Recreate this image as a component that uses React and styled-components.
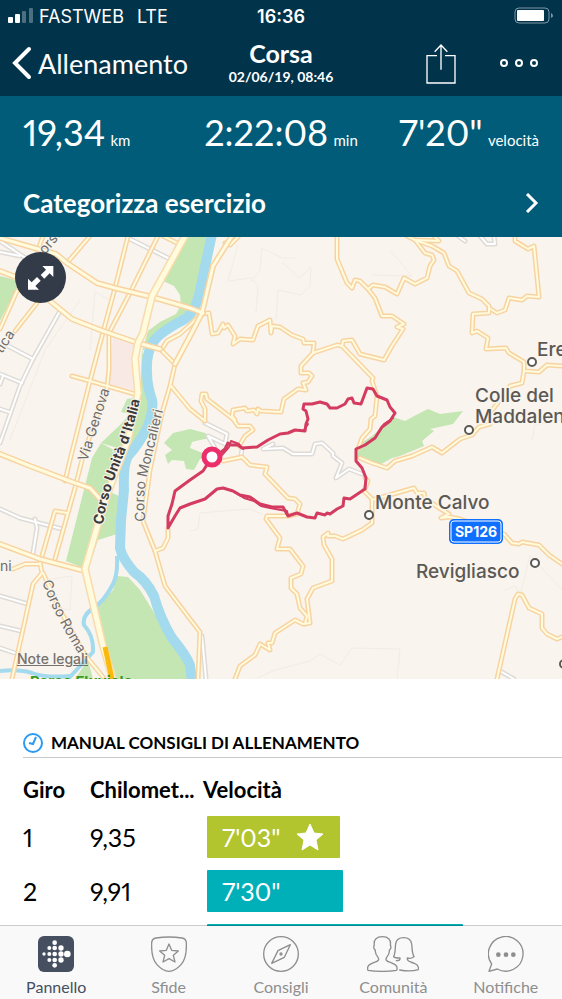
import React from 'react';
import styled, { createGlobalStyle } from 'styled-components';

const laps = [
  { lap: 1, km: '9,35', pace: `7'03"`, width: 40, color: '#b2c42e', best: true },
  { lap: 2, km: '9,91', pace: `7'30"`, width: 41, color: '#00b0b9' },
  { lap: 3, km: '0,08', pace: `13'59"`, width: 77, color: '#00b0b9' },
];

const stats = [
  { value: '19,34', unit: 'km' },
  { value: '2:22:08', unit: 'min' },
  { value: `7'20"`, unit: 'velocità' },
];

// map geometry
const parks = [
  '187,236 208,236 192,308 185,318 155,335 145,348 142,352 148,331 160,322 176,314 181,305 180,295 174,286 163,281',
  '0,276 16,280 17,288 0,321',
  '121,412 127,399 140,397 142,350 147,372 151,395 154,410 146,430 131,452 101,443 120,425 130,414 121,412',
  '101,443 112,449 119,452 112,493 119,496 117,534 98,540 88,570 66,561 92,458',
  '117,576 128,577 140,590 160,622 173,646 187,662 190,679 113,679 97,607 113,590',
  '164,443 173,433 190,429 205,433 211,438 200,440 192,442 190,448 200,452 210,456 200,459 194,470 186,469 184,461 172,460 168,464 165,455 172,450',
  '356,458 360,444 372,436 393,417 405,421 416,415 428,409 440,414 463,411 453,424 430,429 434,431 422,441 424,446 400,456 392,458 378,466 366,460',
  '75,679 88,660 93,679',
];

const alleys = [
  '60,311 33,359 20,386 0,443',
  '8,346 33,359',
  '0,374 22,383',
  '3,376 0,384',
  '0,409 9,412',
  '128,238 168,258',
  '0,241 24,257 40,264',
  '0,252 20,256',
  '0,509 20,518 62,529',
  '35,519 37,528 33,553',
  '0,596 28,604',
  '0,626 21,631',
  '0,648 15,653',
  '205,423 227,434 225,444 208,436 215,448',
  '242,449 241,456',
  '273,444 263,449 283,448 293,454 312,454 315,444 322,443 333,453 333,456 342,463 336,478 349,469 362,474',
  '480,236 487,244 495,244 494,236',
  '458,236 465,241',
  '202,636 206,679',
  '500,671 514,679',
];

const footpaths = [
  '238,245 228,281 251,278 258,286 256,312',
  '251,282 260,270 262,248 282,258 296,258',
  '282,262 299,278 311,267 310,286 301,295 278,290 276,320',
  '190,531 198,529 200,513 235,510 250,509 262,514',
  '257,678 275,670 310,661 320,654 340,665 352,648 400,649 397,679',
  '372,275 412,276 390,250',
  '80,300 45,350 10,440',
  '90,350 95,292 110,300',
  '45,580 72,576 70,610 48,606',
  '505,590 515,586 520,595 530,555 562,590',
  '532,440 535,425 562,420',
];

const streets = [
  '128,236 115,288 102,336 90,381 71,456 65,481',
  '158,236 132,289 109,333 109,369 107,389 92,430 83,456 75,488 55,559',
  '72,376 90,381 138,395',
  '90,236 67,263',
  '43,236 38,250',
  '37,303 15,331',
  '17,291 0,329',
  '163,236 177,243',
  '160,349 175,364',
  '162,349 167,341 180,334 190,325 203,312',
  '175,364 170,386 162,413 150,470 143,521 155,551 165,586 190,619 200,632 198,679',
  '171,386 190,409 205,421 205,409 201,401 202,394 206,394 207,399 233,419 238,426 250,426 253,430 245,436 239,446',
  '67,513 55,511 40,563 42,573 33,584 12,679',
  '13,569 25,564 40,564',
  '43,573 60,610 85,655 103,677',
  '168,529 168,538 163,548 155,551',
  '238,237 230,245 225,243',
  '202,314 209,313 212,334 218,333 223,324 224,328 228,325 235,336 233,344 240,339 253,340 258,326 270,320 271,333 272,326 280,327 292,335 303,339 304,343 314,343 313,353 337,345 342,346 373,378 372,381 377,396 375,416 371,419 370,429 362,438 358,449',
  '313,353 301,366 301,373 309,373 312,376 308,382 303,383 306,390 298,389 284,399 281,412 261,411 258,409 257,414 254,410 247,411 245,408 233,410 232,416 235,420',
  '337,236 337,259 347,283 352,288 355,280 360,281 368,289 375,298 382,316 392,316 404,324 397,327 403,329 392,346 384,360 360,354 352,340 343,341 342,346',
  '368,289 373,285 385,287 397,294 404,278 415,284 427,278 430,266 434,260 432,255 425,253 415,240 439,241 434,236',
  '407,236 415,240 432,246 444,253 449,266 457,271 469,293 482,299 489,306 489,313 473,314 472,333 477,331 488,338 486,349 506,348 509,353 524,362 524,371 522,383 510,386 505,394 489,414 490,424 479,427 472,435 460,439 442,453 432,447 412,456 395,461 387,468 372,463 360,458',
  '489,308 497,313 505,310 509,298 522,300 527,296 539,297 534,246 528,249 515,241 515,236',
  '524,371 539,372 547,365 562,366',
  '223,461 242,457 250,465 267,467 265,474 288,498 295,499 300,504 297,514 288,516 267,516 266,519 280,538 277,549 290,549 303,566 301,574 291,578 291,588 297,594 300,608 307,616 305,624',
  '365,478 368,481 364,491 372,499 372,523 362,530 343,539 335,536 328,536 328,533 323,537 324,545 332,559 332,581 313,588 307,599 310,623 303,624 295,620 275,633 272,643 268,643 270,650 260,644 255,655 240,666 235,679',
  '372,500 414,488 417,493 424,493 425,498 439,508 449,514 441,518 450,517 460,519 504,534 512,543 519,544 522,542 539,545 549,555 562,564',
  '497,679 515,599 518,594 522,595 529,608 542,614 542,628 547,634 557,639 562,637',
];

const avenues = [
  '0,238 38,249 56,254 67,263 97,283 115,288 152,297 190,308 203,313',
  '0,271 18,278 50,301 72,319 103,331 138,343 160,349',
  '0,454 30,466 75,483 90,488 99,498',
  '0,544 40,559 85,571',
  '232,236 213,266 202,313 190,336 175,364',
];

const boulevards = [
  '185,236 152,296 143,333 138,343 135,359 138,393',
  '138,393 128,440 108,492 98,524 85,569 103,646 113,679',
];

const river =
  'M212 234 Q206 262 199 295 Q195 312 185 319 Q160 332 154 341 Q146 352 147 372 Q147 386 152 400 Q154 410 147 428 Q139 444 128 456 Q123 464 124 490 L121 520 L120 548 Q122 558 134 572 Q146 580 154 596 Q160 618 172 638 Q186 655 190 665 L192 682';
const stream =
  'M117 556 Q118 574 113 584 Q104 602 92 609 Q82 616 84 625 Q94 636 93 652 Q84 662 68 679';

const route =
  'M212 457 L220 453 L225 449 L228 443 L231 445 L238 445 L242 448 L257 447 L268 440 L280 434 L288 433 L295 430 L305 431 L306 424 L308 419 L306 411 L303 409 L304 404 L312 404 L320 402 L327 404 L330 408 L337 408 L345 404 L348 399 L352 398 L354 403 L361 404 L364 396 L367 388 L373 389 L377 396 L387 400 L390 407 L395 413 L390 421 L382 427 L375 438 L365 445 L356 449 L356 461 L362 468 L366 478 L365 489 L350 499 L344 498 L343 506 L337 509 L330 514 L327 513 L325 515 L317 513 L315 518 L307 517 L297 513 L288 516 L283 507 L272 507 L260 504 L250 497 L240 495 L233 491 L223 488 L217 489 L205 499 L190 504 L180 508 L175 516 L168 528 L168 516 L172 504 L175 491 L190 480 L203 471 Z';
const routeBack =
  'M222 455 L229 447 L231 441 L239 444 L243 449 M288 516 L287 511 L281 510 L270 508 L261 506 L254 501 L244 498 L234 492 M304 430 L308 424 M393 418 L384 424 L380 430';

const towns = [
  { x: 537, y: 356, text: 'Ere' },
  { x: 475, y: 402, text: 'Colle del' },
  { x: 475, y: 423, text: 'Maddalen' },
  { x: 375, y: 509, text: 'Monte Calvo' },
  { x: 416, y: 578, text: 'Revigliasco' },
];

const markers = [
  [532, 362],
  [469, 430],
  [369, 515],
  [535, 563],
  [564, 664],
];

const RoadLines = ({ lines, casing, fill, width }) => (
  <g fill="none" strokeLinejoin="round" strokeLinecap="round">
    {lines.map(points => (
      <polyline key={points} points={points} stroke={casing} strokeWidth={width + 3} />
    ))}
    {lines.map(points => (
      <polyline key={points} points={points} stroke={fill} strokeWidth={width} />
    ))}
  </g>
);

const RouteMap = () => (
  <MapDrawing viewBox="0 237 562 442" role="img" aria-label="Mappa del percorso">
    <rect x="0" y="230" width="562" height="460" fill="#f9f4ed" />
    <polygon points="113,337 136,343 134,390 108,384" fill="#f9e9e5" />
    {parks.map(points => (
      <polygon key={points} points={points} fill="#c4e6b2" />
    ))}
    <g fill="none" stroke="#f1ece4">
      {footpaths.map(points => (
        <polyline key={points} points={points} />
      ))}
    </g>
    <g fill="none" stroke="#a3daee" strokeLinejoin="round">
      <path d={river} strokeWidth="10" />
      <path d={stream} strokeWidth="4" />
      <path d="M0 671 Q20 669 32 673 Q45 678 70 676" strokeWidth="4" />
    </g>
    <RoadLines lines={alleys} casing="#dedbd7" fill="#ffffff" width={2} />
    <RoadLines lines={streets} casing="#f8d3a2" fill="#fffbdc" width={2} />
    <RoadLines lines={avenues} casing="#f8d3a2" fill="#fffbdc" width={3} />
    <RoadLines lines={boulevards} casing="#f8dcae" fill="#fffbdc" width={5} />
    <path d="M105 647 L112 679" stroke="#fbb90c" strokeWidth="5" />
    <g fill="none" stroke="#d43b60" strokeLinejoin="round" strokeLinecap="round">
      <path d={route} strokeWidth="3" />
      <path d={routeBack} strokeWidth="2" />
    </g>
    <circle cx="212" cy="457" r="8" fill="#fff" stroke="#ec2f6b" strokeWidth="5" />

    <path id="genova" d="M87 462 L110 389" fill="none" />
    <path id="unita" d="M103 525 Q107 495 122 459 Q132 435 141 396" fill="none" />
    <path id="moncalieri" d="M146 521 Q141 495 150 464 L164 407" fill="none" />
    <path id="roma" d="M42 582 Q56 620 84 662" fill="none" />
    <path id="corso" d="M45 255 L68 228" fill="none" />
    <path id="tica" d="M2 354 L21 325" fill="none" />
    <StreetName>
      <textPath href="#genova">Via Genova</textPath>
    </StreetName>
    <StreetName $main>
      <textPath href="#unita">Corso Unità d'Italia</textPath>
    </StreetName>
    <StreetName>
      <textPath href="#moncalieri">Corso Moncalieri</textPath>
    </StreetName>
    <StreetName>
      <textPath href="#roma">Corso Roma</textPath>
    </StreetName>
    <StreetName>
      <textPath href="#corso">orso</textPath>
    </StreetName>
    <StreetName>
      <textPath href="#tica">tica</textPath>
    </StreetName>
    <StreetName x="0" y="571">
      ni
    </StreetName>
    <ParkName x="30" y="687">
      Parco Fluviale
    </ParkName>

    {towns.map(({ x, y, text }) => (
      <TownName key={text} x={x} y={y}>
        {text}
      </TownName>
    ))}
    {markers.map(([cx, cy]) => (
      <circle key={cx} cx={cx} cy={cy} r="4" fill="#fff" stroke="#5b5955" strokeWidth="2" />
    ))}
    <rect x="449" y="519" width="54" height="25" rx="5" fill="#0f6fff" />
    <rect x="451" y="521" width="50" height="21" rx="3" fill="none" stroke="#fff" />
    <RoadNumber x="476" y="537">
      SP126
    </RoadNumber>
  </MapDrawing>
);

const FitbitIcon = () => (
  <svg width="36" height="36" viewBox="0 0 108 108">
    <rect width="108" height="108" rx="18" fill="#454f60" />
    <g fill="#fff">
      <circle cx="18" cy="54" r="5" />
      {[36, 54, 72].map(y => (
        <circle key={y} cx="34" cy={y} r="6" />
      ))}
      {[20, 36, 54, 72, 88].map(y => (
        <circle key={y} cx="50" cy={y} r="7" />
      ))}
      {[36, 54, 72].map(y => (
        <circle key={y} cx="69" cy={y} r="8" />
      ))}
      <circle cx="88" cy="54" r="10" />
    </g>
  </svg>
);

const ShieldIcon = () => (
  <LineIcon width="36" height="36" viewBox="0 0 108 108">
    <path d="M15 6 Q54 0 93 6 Q105 8 106 20 Q108 66 90 86 Q72 106 54 106 Q36 106 18 86 Q0 66 2 20 Q3 8 15 6Z" />
    <path d="M54 24 L62 43 L82 45 L67 58 L72 78 L54 68 L36 78 L41 58 L26 45 L46 43Z" />
  </LineIcon>
);

const CompassIcon = () => (
  <LineIcon width="36" height="36" viewBox="0 0 108 108">
    <circle cx="54" cy="54" r="52" />
    <path d="M26 82 L45 44 L82 26 L64 64Z" />
    <circle cx="54" cy="54" r="3" />
  </LineIcon>
);

const PeopleIcon = () => (
  <LineIcon width="52" height="36" viewBox="0 0 156 108">
    <path d="M3 103 C-2 90 8 84 22 79 C36 75 37 70 33 64 C27 57 24 48 25 42 C20 40 19 31 22 28 C19 10 30 2 46 2 C62 2 73 10 70 28 C73 31 72 40 67 42 C68 48 65 57 59 64 C55 70 56 75 70 79 C84 84 94 90 89 103 C60 107 30 107 3 103Z" />
    <path d="M88 74 C96 74 100 72 99 66 C92 66 84 66 80 62 C86 50 84 34 86 24 C88 9 98 5 110 5 C122 5 132 10 134 24 C136 36 134 50 141 62 C136 66 128 68 121 66 V70 C123 77 132 78 142 82 C152 86 156 92 154 101 C140 105 115 105 98 102" />
  </LineIcon>
);

const ChatIcon = () => (
  <LineIcon width="36" height="36" viewBox="0 0 108 108">
    <path d="M11 84 A52 52 0 1 1 28 99 L3 106Z" />
    <g fill="#8e8e8e" stroke="none">
      <circle cx="31" cy="56" r="7" />
      <circle cx="54" cy="56" r="7" />
      <circle cx="76" cy="56" r="7" />
    </g>
  </LineIcon>
);

const tabs = [
  { label: 'Pannello', icon: <FitbitIcon />, active: true },
  { label: 'Sfide', icon: <ShieldIcon /> },
  { label: 'Consigli', icon: <CompassIcon /> },
  { label: 'Comunità', icon: <PeopleIcon /> },
  { label: 'Notifiche', icon: <ChatIcon /> },
];

const App = () => {
  return (
    <Screen>
      <GlobalStyle />
      <Header>
        <StatusBar>
          <Carrier>
            <svg width="26" height="16" viewBox="0 0 26 16" fill="#fff">
              <rect x="0" y="9" width="5" height="6" rx="1" />
              <rect x="7" y="6" width="5" height="9" rx="1" />
              <rect x="14" y="3" width="4" height="12" rx="1" opacity=".3" />
              <rect x="21" y="0" width="4" height="15" rx="1" opacity=".3" />
            </svg>
            <span>FASTWEB</span>
            <Network>LTE</Network>
          </Carrier>
          <Clock>16:36</Clock>
          <Battery width="40" height="18" viewBox="0 0 40 18">
            <rect x="1" y="1" width="34" height="15" rx="4" fill="none" stroke="#7e97a6" />
            <rect x="3" y="3" width="27" height="11" rx="1" fill="#fff" />
            <path d="M37 6 Q39 7 39 9 Q39 10 37 11Z" fill="#7e97a6" />
          </Battery>
        </StatusBar>
        <NavBar>
          <BackButton>
            <svg width="20" height="34" viewBox="0 0 20 34">
              <path d="M17 3 L3 17 L17 31" fill="none" stroke="#fff" strokeWidth="4" strokeLinecap="round" />
            </svg>
            Allenamento
          </BackButton>
          <Heading>
            <Title>Corsa</Title>
            <Subtitle>02/06/19, 08:46</Subtitle>
          </Heading>
          <Actions>
            <IconButton aria-label="Condividi">
              <svg width="30" height="41" viewBox="0 0 90 123" fill="none" stroke="#fff" strokeWidth="4">
                <path d="M33 38 H3 V120 H87 V38 H57 M45 80 V6 M26 26 L45 6 L64 26" />
              </svg>
            </IconButton>
            <IconButton aria-label="Altro">
              <svg width="40" height="10" viewBox="0 0 40 10" fill="none" stroke="#fff" strokeWidth="2">
                <circle cx="5" cy="5" r="3" />
                <circle cx="20" cy="5" r="3" />
                <circle cx="35" cy="5" r="3" />
              </svg>
            </IconButton>
          </Actions>
        </NavBar>
      </Header>

      <Content>
        <Summary>
          <Stats>
            {stats.map(({ value, unit }) => (
              <Stat key={unit}>
                {value} <Unit>{unit}</Unit>
              </Stat>
            ))}
          </Stats>
          <CategoryButton>
            Categorizza esercizio
            <svg width="14" height="20" viewBox="0 0 14 20">
              <path d="M2 1 L11 10 L2 19" fill="none" stroke="#fff" strokeWidth="3" />
            </svg>
          </CategoryButton>
        </Summary>

        <MapSection>
          <RouteMap />
          <ExpandButton aria-label="Espandi mappa">
            <svg width="51" height="51" viewBox="45 46 153 153" fill="#fff">
              <path d="M127 88 H160 V121 L149 110 L133 126 L122 115 L138 99Z" />
              <path d="M117 159 H84 V126 L95 137 L111 121 L122 132 L106 148Z" />
            </svg>
          </ExpandButton>
          <LegalLink href="#note">Note legali</LegalLink>
        </MapSection>

        <Laps>
          <SectionTitle>
            <svg width="20" height="20" viewBox="0 0 20 20" fill="none" stroke="#2b9af3" strokeWidth="2">
              <circle cx="10" cy="10" r="9" />
              <path d="M13 4 L10 11 L6 10" />
            </svg>
            MANUAL CONSIGLI DI ALLENAMENTO
          </SectionTitle>
          <Table>
            <thead>
              <tr>
                <HeadCell $width={67}>Giro</HeadCell>
                <HeadCell $width={113}>Chilomet...</HeadCell>
                <HeadCell>Velocità</HeadCell>
              </tr>
            </thead>
            <tbody>
              {laps.map(({ lap, km, pace, width, color, best }) => (
                <tr key={lap}>
                  <Cell>{lap}</Cell>
                  <Cell>{km}</Cell>
                  <BarCell>
                    <Bar $color={color} style={{ width: `${width}%` }}>
                      {pace}
                      {best && (
                        <svg width="30" height="28" viewBox="0 0 30 28" fill="#fff">
                          <path
                            d="M15 1 L19 10 L28 11 L21 17 L23 27 L15 22 L7 27 L9 17 L2 11 L11 10Z"
                            stroke="#fff"
                            strokeLinejoin="round"
                          />
                        </svg>
                      )}
                    </Bar>
                  </BarCell>
                </tr>
              ))}
            </tbody>
          </Table>
        </Laps>
      </Content>

      <TabBar>
        {tabs.map(({ label, icon, active }) => (
          <Tab key={label} $active={active}>
            {icon}
            {label}
          </Tab>
        ))}
      </TabBar>
    </Screen>
  );
};

export default App;

const GlobalStyle = createGlobalStyle`
  * {
    box-sizing: border-box;
  }

  body {
    margin: 0;
    font-family: Lato, 'Open Sans', sans-serif;
    font-variant-numeric: proportional-nums;
    background-color: white;
  }

  button {
    padding: 0;
    border: none;
    background: none;
    color: inherit;
    font: inherit;
    cursor: pointer;
  }

  svg {
    display: block;
    flex-shrink: 0;
  }
`;

const Screen = styled.div`
  display: flex;
  flex-direction: column;
  height: 100vh;
`;

const Header = styled.header`
  flex-shrink: 0;
  background-color: #01334b;
  color: white;
`;

const StatusBar = styled.div`
  display: grid;
  grid-template-columns: 1fr auto 1fr;
  align-items: center;
  height: 30px;
  padding: 2px 8px 0;
  font-family: Inter, sans-serif;
  font-size: 18px;
`;

const Carrier = styled.div`
  display: flex;
  align-items: center;
  gap: 5px;
`;

const Network = styled.span`
  margin-left: 8px;
`;

const Clock = styled.time`
  font-weight: 600;
`;

const Battery = styled.svg`
  justify-self: end;
`;

const NavBar = styled.div`
  display: grid;
  grid-template-columns: 1fr auto 1fr;
  align-items: center;
  height: 66px;
  padding: 0 12px;
`;

const BackButton = styled.button`
  display: flex;
  align-items: center;
  gap: 6px;
  justify-self: start;

  &&& {
    font-size: 27px;
  }
`;

const Heading = styled.div`
  text-align: center;
`;

const Title = styled.h1`
  margin: 0;
  font-size: 25px;
  line-height: 28px;
  font-weight: 700;
`;

const Subtitle = styled.div`
  font-size: 14px;
  line-height: 20px;
  font-weight: 700;
  font-variant-numeric: tabular-nums;
`;

const Actions = styled.div`
  display: flex;
  justify-content: flex-end;
  align-items: center;
  gap: 43px;
  padding-right: 11px;
`;

const IconButton = styled.button``;

const Content = styled.main`
  flex: 1;
  min-height: 0;
  overflow-y: auto;
  scrollbar-width: none;
`;

const Summary = styled.section`
  background-color: #005c79;
  color: white;
  padding: 14px 23px 0;
`;

const Stats = styled.div`
  display: grid;
  grid-template-columns: 1fr auto 1fr;
`;

const Stat = styled.div`
  height: 44px;
  font-size: 36px;
  line-height: 44px;
  white-space: nowrap;

  &:last-child {
    text-align: right;
  }
`;

const Unit = styled.span`
  margin-left: -4px;
  font-size: 15px;
  line-height: 20px;
`;

const CategoryButton = styled.button`
  display: flex;
  justify-content: space-between;
  align-items: center;
  width: 100%;
  height: 83px;
  padding-top: 14px;

  &&& {
    padding-top: 14px;
    font-size: 26px;
    font-weight: 700;
    line-height: 30px;
  }
`;

const MapSection = styled.section`
  position: relative;
`;

const MapDrawing = styled.svg`
  width: 100%;
  height: auto;
  aspect-ratio: 562 / 442;
  font-family: Inter, sans-serif;
`;

const StreetName = styled.text`
  font-size: 14px;
  font-weight: ${({ $main }) => ($main ? 700 : 400)};
  fill: ${({ $main }) => ($main ? '#3c3b39' : '#6f6d69')};
  stroke: #f9f4ed;
  stroke-width: 2px;
  paint-order: stroke;
`;

const ParkName = styled.text`
  font-size: 15px;
  font-weight: 700;
  fill: #3c9a25;
`;

const TownName = styled.text`
  font-size: 19px;
  font-weight: 500;
  fill: #5b5955;
  stroke: #f9f4ed;
  stroke-width: 3px;
  paint-order: stroke;
`;

const RoadNumber = styled.text`
  font-size: 14px;
  font-weight: 700;
  fill: white;
  text-anchor: middle;
`;

const ExpandButton = styled.button`
  position: absolute;
  top: 15px;
  left: 15px;
  border-radius: 50%;

  &&& {
    background-color: #333a48;
  }
`;

const LegalLink = styled.a`
  position: absolute;
  left: 17px;
  bottom: 12px;
  color: #75736f;
  font-family: Inter, sans-serif;
  font-size: 14px;
  font-weight: 500;
`;

const Laps = styled.section`
  padding-top: 51px;
  padding-left: 23px;
`;

const SectionTitle = styled.h2`
  display: flex;
  align-items: center;
  gap: 8px;
  height: 28px;
  margin: 0;
  padding-bottom: 2px;
  border-bottom: 1px solid #c9c9c9;
  font-size: 17px;
  font-weight: 700;
`;

const Table = styled.table`
  width: 100%;
  table-layout: fixed;
  border-collapse: collapse;
  text-align: left;
`;

const HeadCell = styled.th`
  width: ${({ $width }) => ($width ? `${$width}px` : 'auto')};
  height: 52px;
  padding: 12px 0 0;
  font-size: 22px;
  line-height: 24px;
  font-weight: 700;
`;

const Cell = styled.td`
  height: 54px;
  padding: 0;
  font-size: 25px;
`;

const BarCell = styled(Cell)`
  padding: 0 23px 0 4px;
`;

const Bar = styled.div`
  display: flex;
  justify-content: space-between;
  align-items: center;
  height: 42px;
  padding: 0 15px;
  border-radius: 1px;
  background-color: ${({ $color }) => $color};
  color: white;
`;

const TabBar = styled.nav`
  position: relative;
  display: grid;
  grid-template-columns: repeat(5, 1fr);
  flex-shrink: 0;
  height: 74px;
  margin-top: -1px;
  border-top: 1px solid rgba(0, 0, 0, 0.2);
  background-color: #f9f9f9;
  background-clip: padding-box;
`;

const Tab = styled.button`
  display: flex;
  flex-direction: column;
  align-items: center;
  gap: 4px;

  &&& {
    padding-top: 10px;
    color: ${({ $active }) => ($active ? '#454f60' : '#8e8e8e')};
    font-size: 16px;
    line-height: 22px;
  }
`;

const LineIcon = styled.svg`
  fill: none;
  stroke: #8e8e8e;
  stroke-width: 4px;
  stroke-linejoin: round;
  stroke-linecap: round;
`;
